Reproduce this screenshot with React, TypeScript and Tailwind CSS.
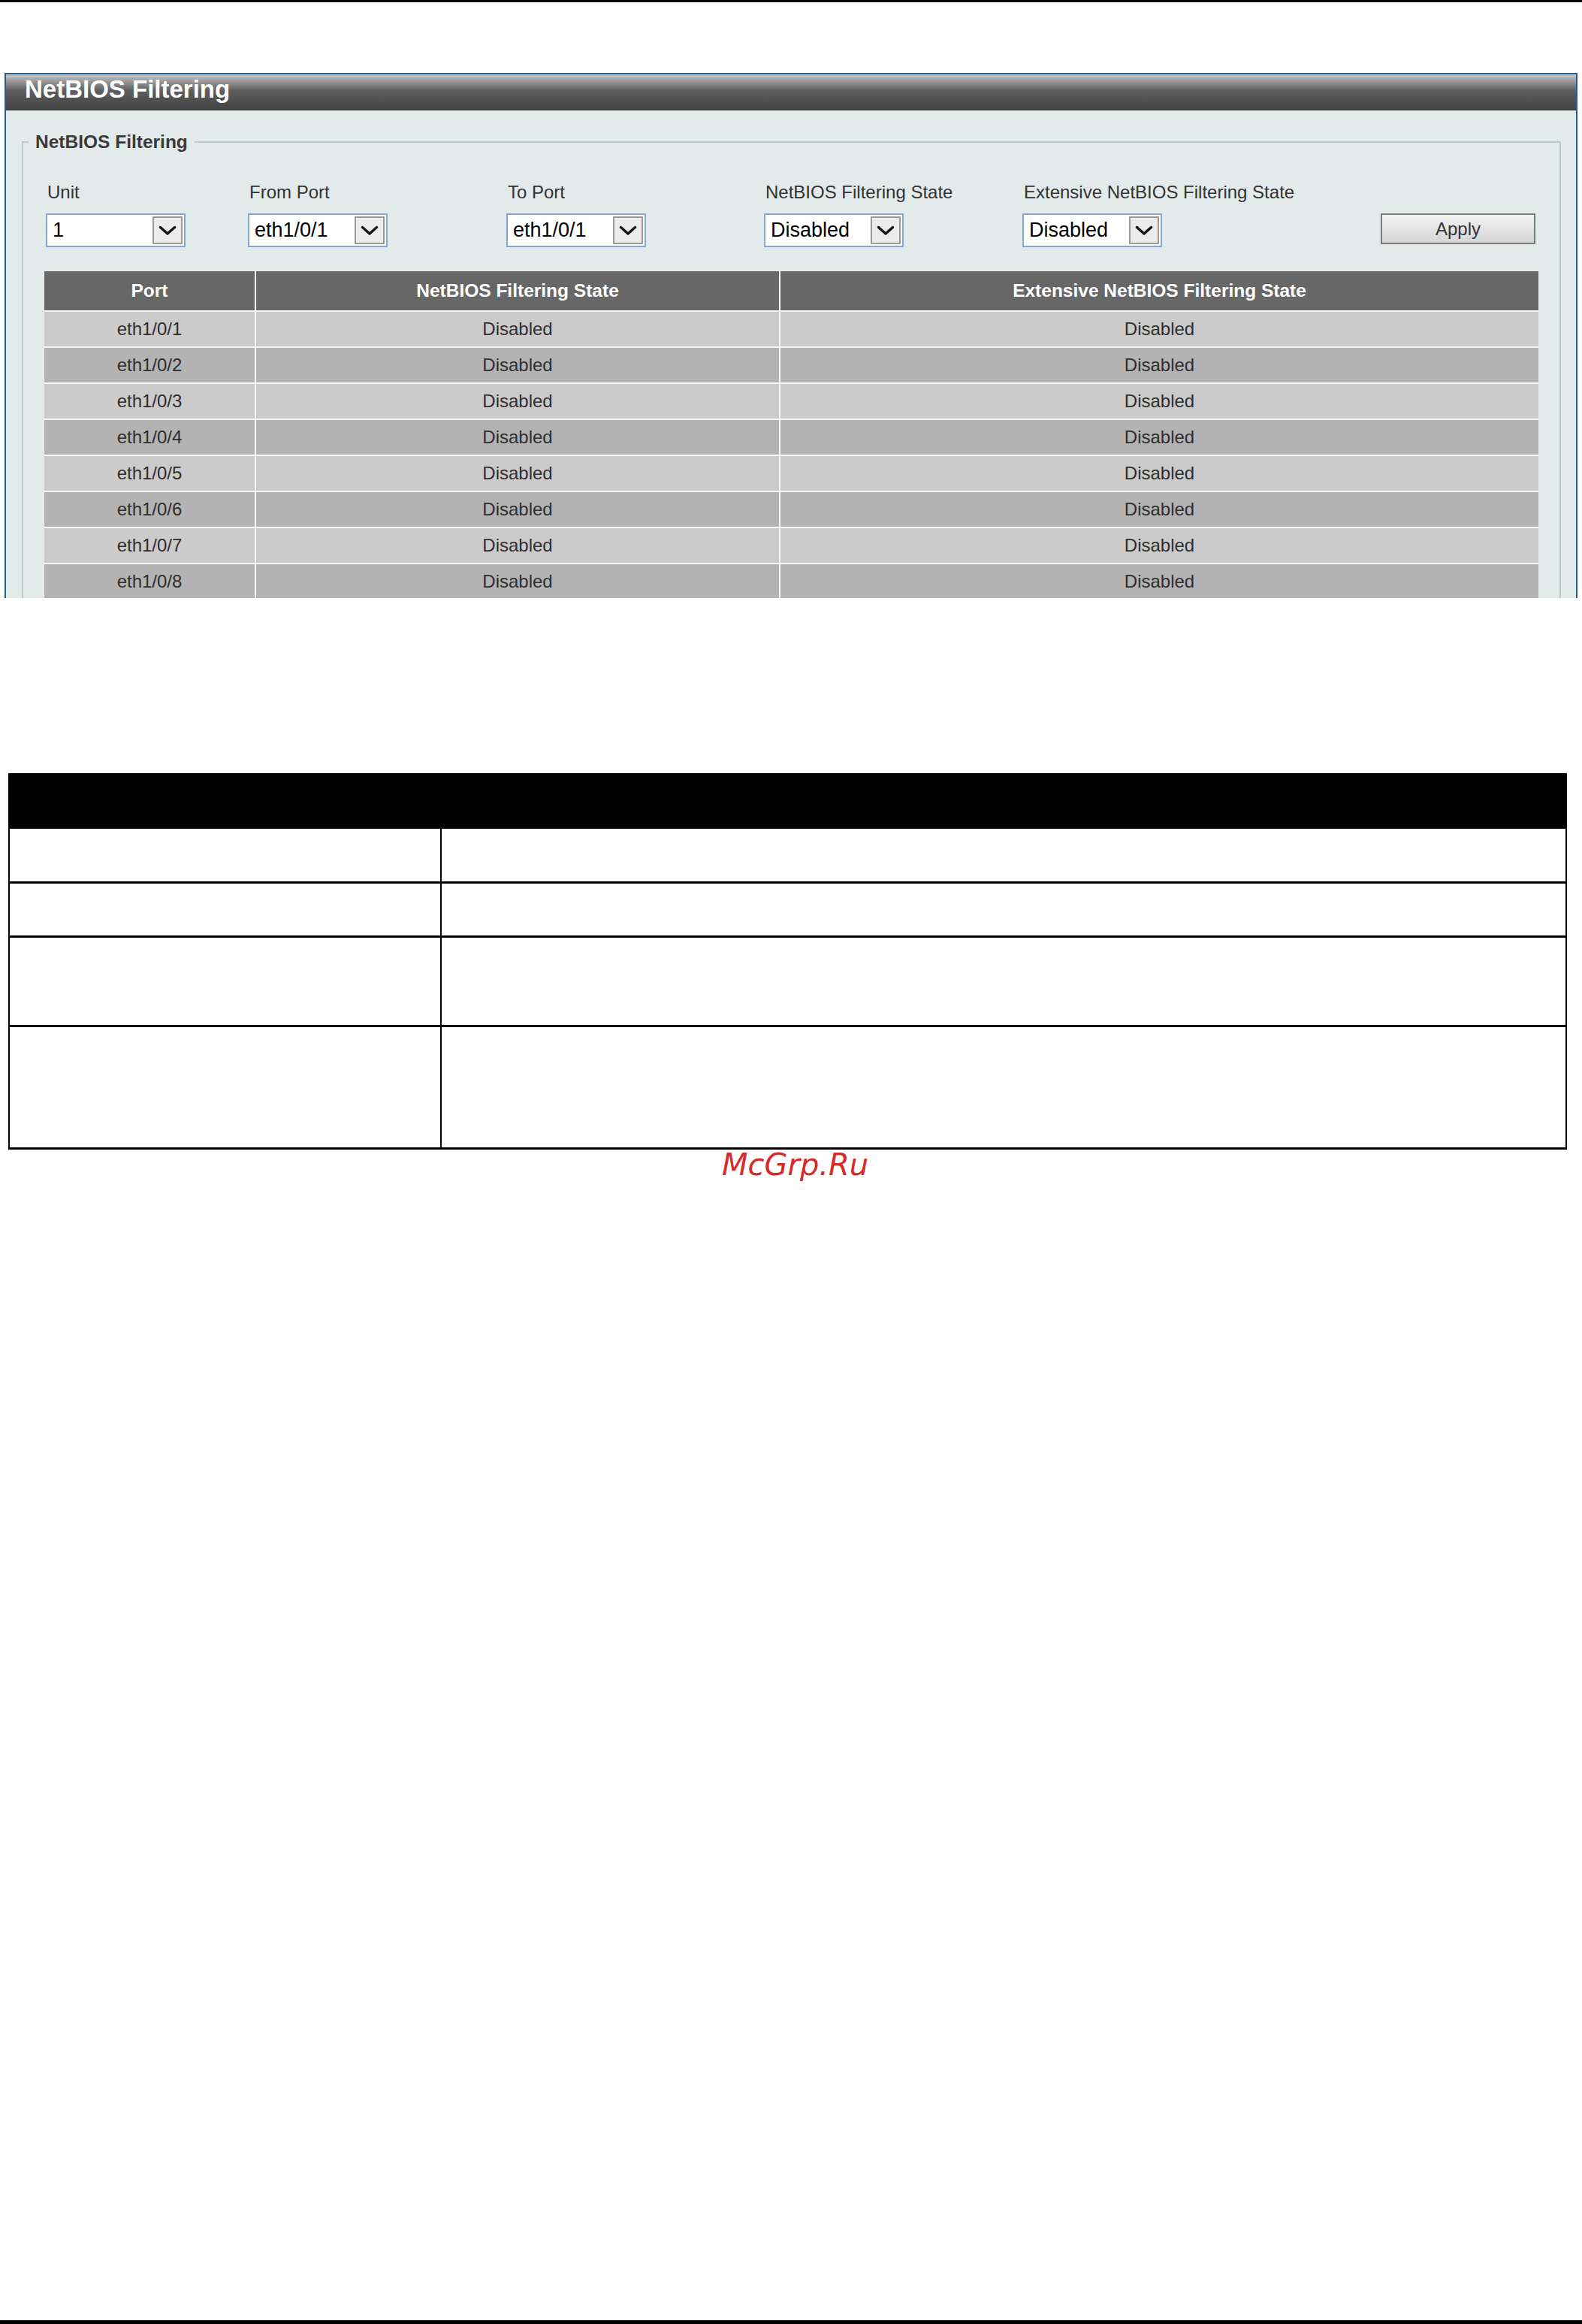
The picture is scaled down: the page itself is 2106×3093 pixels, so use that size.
import React from 'react';

const ports = ['eth1/0/1', 'eth1/0/2', 'eth1/0/3', 'eth1/0/4', 'eth1/0/5', 'eth1/0/6', 'eth1/0/7', 'eth1/0/8'];

const Chevron = () => (
  <svg width="24" height="14" viewBox="0 0 24 14" fill="none">
    <path d="M2.5 2.5 L12 11 L21.5 2.5" stroke="#161616" strokeWidth="3.5" strokeLinecap="round" strokeLinejoin="round" />
  </svg>
);

const FakeSelect = ({ value }: { value: string }) => (
  <div className="flex h-[45px] w-[186px] items-center border-2 border-[#84a7d4] bg-white pl-[7px] pr-[2px]">
    <span className="flex-1 text-[27px] leading-none text-black">{value}</span>
    <div className="flex h-[37px] w-[40px] items-center justify-center border-2 border-[#9a9a9a] bg-[#ebebeb]">
      <Chevron />
    </div>
  </div>
);

const fields = [
  { label: 'Unit', value: '1', width: 'w-[269px]' },
  { label: 'From Port', value: 'eth1/0/1', width: 'w-[344px]' },
  { label: 'To Port', value: 'eth1/0/1', width: 'w-[343px]' },
  { label: 'NetBIOS Filtering State', value: 'Disabled', width: 'w-[344px]' },
  { label: 'Extensive NetBIOS Filtering State', value: 'Disabled', width: 'w-[400px]' },
];

const App = () => {
  return (
    <div className="flex h-[3093px] w-[2106px] flex-col bg-white font-['Liberation_Sans',Arial,sans-serif]">
      <div className="h-[3px] bg-black" />

      {/* panel, cut off at the bottom like the screenshot */}
      <div className="ml-[6px] mt-[94px] h-[699px] w-[2094px] overflow-hidden border-x-2 border-t-2 border-[#245d8f] bg-[#e2eaea]">
        <div className="h-[48px] bg-linear-to-b from-[#c9c9c9] via-[#5e5e5e] via-45% to-[#424242] pl-[25px]">
          <div className="text-[33px] font-bold leading-[40px] text-white">NetBIOS Filtering</div>
        </div>

        <fieldset className="mx-[21px] mt-[28px] border-2 border-[#bccaca]">
          <legend className="ml-[7px] px-[9px] text-[24.5px] font-bold leading-[28px] text-[#3a3a3a]">NetBIOS Filtering</legend>
          <div className="px-[28px] pt-[39px]">
            <div className="flex pl-[2px]">
              {fields.map((f) => (
                <div key={f.label} className={`flex flex-col gap-[14px] ${f.width}`}>
                  <div className="pl-[2px] text-[24px] leading-[28px] text-[#333]">{f.label}</div>
                  <FakeSelect value={f.value} />
                </div>
              ))}
              <button className="ml-auto mr-[4px] mt-[42px] h-[41px] w-[206px] border-2 border-[#7a7a7a] bg-linear-to-b from-[#f3f3f3] to-[#d5d5d5] text-[24px] text-[#333]">
                Apply
              </button>
            </div>

            <div className="mt-[32px] grid grid-cols-[280px_696px_1009px] gap-[2px] bg-[#f6f6f6] text-center">
              {['Port', 'NetBIOS Filtering State', 'Extensive NetBIOS Filtering State'].map((h) => (
                <div key={h} className="flex h-[52px] items-center justify-center bg-[#676767] text-[24.5px] font-bold text-white">
                  {h}
                </div>
              ))}
              {ports.map((p, i) => {
                const bg = i % 2 === 0 ? 'bg-[#cbcbcb]' : 'bg-[#b3b3b3]';
                return (
                  <React.Fragment key={p}>
                    <div className={`flex h-[46px] items-center justify-center text-[24px] text-[#2e2e2e] ${bg}`}>{p}</div>
                    <div className={`flex h-[46px] items-center justify-center text-[24px] text-[#2e2e2e] ${bg}`}>Disabled</div>
                    <div className={`flex h-[46px] items-center justify-center text-[24px] text-[#2e2e2e] ${bg}`}>Disabled</div>
                  </React.Fragment>
                );
              })}
            </div>
          </div>
        </fieldset>
      </div>

      {/* parameter description table (empty) */}
      <div className="ml-[11px] mt-[233px] w-[2075px]">
        <div className="h-[74px] bg-black" />
        {[73, 72, 119, 163].map((h) => (
          <div key={h} className="flex border-x-2 border-b-[3px] border-black" style={{ height: h }}>
            <div className="w-[575px] border-r-2 border-black" />
            <div className="flex-1" />
          </div>
        ))}
      </div>

      <div className="pl-[961px] font-['DejaVu_Sans',sans-serif] text-[40px] italic leading-[40px] text-[#d42b2b]">McGrp.Ru</div>

      <div className="mt-auto h-[5px] bg-black" />
    </div>
  );
};

export default App;
